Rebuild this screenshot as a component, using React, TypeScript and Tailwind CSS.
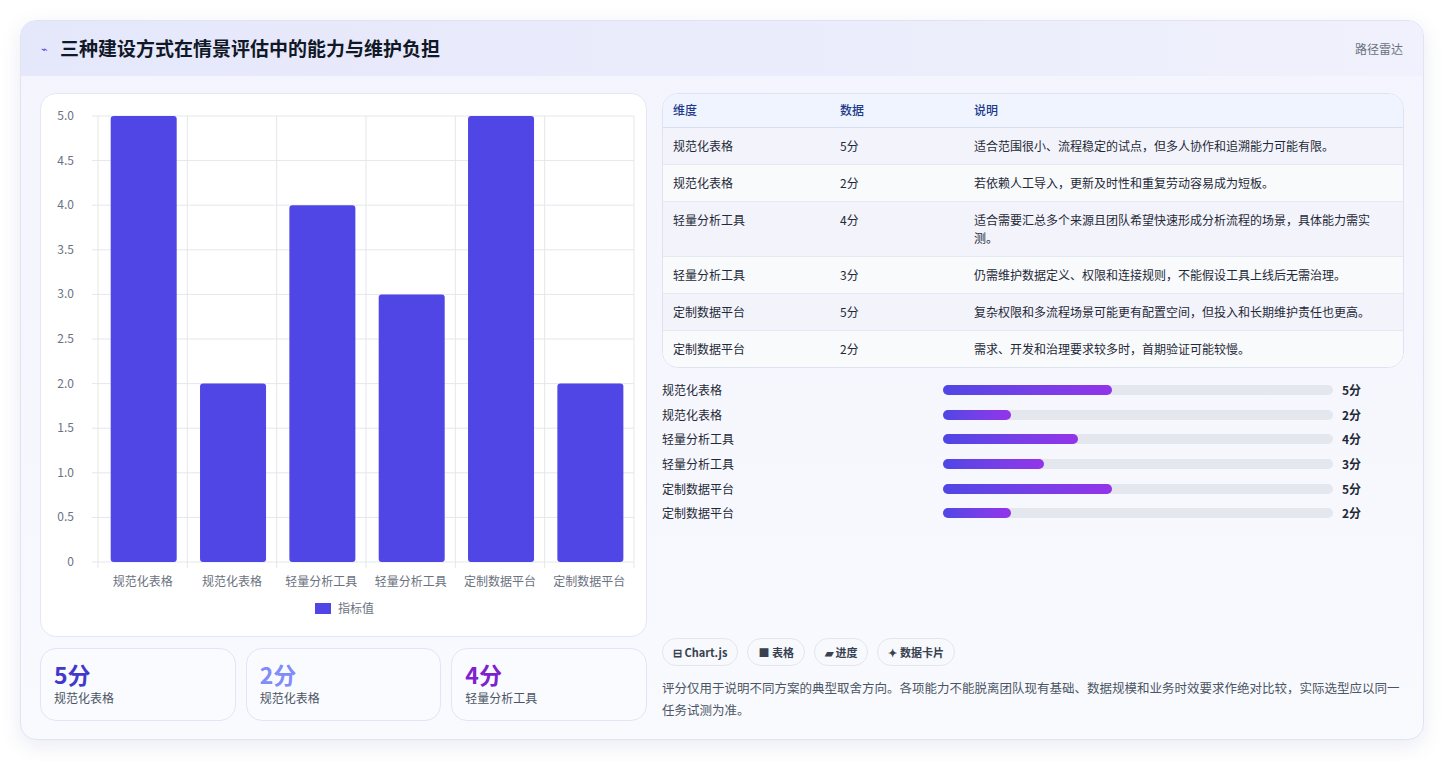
import React from "react";

const cats = ["规范化表格", "规范化表格", "轻量分析工具", "轻量分析工具", "定制数据平台", "定制数据平台"];
const vals = [5, 2, 4, 3, 5, 2];
const rows = [
  ["规范化表格", "5分", "适合范围很小、流程稳定的试点，但多人协作和追溯能力可能有限。"],
  ["规范化表格", "2分", "若依赖人工导入，更新及时性和重复劳动容易成为短板。"],
  ["轻量分析工具", "4分", "适合需要汇总多个来源且团队希望快速形成分析流程的场景，具体能力需实测。"],
  ["轻量分析工具", "3分", "仍需维护数据定义、权限和连接规则，不能假设工具上线后无需治理。"],
  ["定制数据平台", "5分", "复杂权限和多流程场景可能更有配置空间，但投入和长期维护责任也更高。"],
  ["定制数据平台", "2分", "需求、开发和治理要求较多时，首期验证可能较慢。"],
];

function Chart() {
  const x0 = 57, x1 = 593, yTop = 22, yBot = 468;
  const w = (x1 - x0) / 6;
  const ticks = [0, 0.5, 1, 1.5, 2, 2.5, 3, 3.5, 4, 4.5, 5];
  const y = (v: number) => yBot - (v / 5) * (yBot - yTop);
  return (
    <svg width="607" height="544" className="block" style={{ fontFamily: '"Noto Sans CJK SC", sans-serif' }}>
      {ticks.map((t) => (
        <g key={t}>
          <line x1={x0 - 6} x2={x1} y1={y(t)} y2={y(t)} stroke="#e5e7eb" />
          <text x={x0 - 24} y={y(t) + 4} fontSize="12" fill="#6b7280" textAnchor="end">{t === 0 ? "0" : t.toFixed(1)}</text>
        </g>
      ))}
      {[0, 1, 2, 3, 4, 5, 6].map((i) => (
        <line key={i} x1={x0 + i * w} x2={x0 + i * w} y1={yTop} y2={yBot + 6} stroke="#e5e7eb" />
      ))}
      {vals.map((v, i) => (
        <g key={i}>
          <rect x={x0 + i * w + 12.7} y={y(v)} width={66} height={yBot - y(v)} rx="3" fill="#4f46e5" />
          <text x={x0 + i * w + w / 2} y={yBot + 24} fontSize="12" fill="#6b7280" textAnchor="middle">{cats[i]}</text>
        </g>
      ))}
      <rect x="274" y="509" width="16" height="11" fill="#4f46e5" />
      <text x="297" y="519" fontSize="12" fill="#6b7280">指标值</text>
    </svg>
  );
}

export default function App() {
  return (
    <div className="min-h-[761px] bg-white p-5" style={{ fontFamily: '"Noto Sans CJK SC", "Noto Sans", sans-serif' }}>
      <div className="rounded-2xl border border-[#dfe3f3] bg-gradient-to-b from-[#f3f4fd] to-[#f9fafe] shadow-[0_6px_20px_rgba(80,90,160,0.12)] overflow-hidden">
        <div className="flex h-[55px] items-center justify-between bg-gradient-to-r from-[#e5e7fb] to-[#f0f1fc] px-[20px]">
          <div className="flex items-center gap-3">
            <span className="text-[11px] text-[#4f46e5]">⌁</span>
            <span className="text-[19px] font-bold text-[#111827]">三种建设方式在情景评估中的能力与维护负担</span>
          </div>
          <span className="text-[12px] text-[#6b7280]">路径雷达</span>
        </div>
        <div className="flex gap-[15px] px-[19px] pt-[17px] pb-[18px]">
          <div className="flex w-[607px] flex-col gap-[11px]">
            <div className="h-[544px] rounded-2xl border border-[#e3e7f3] bg-white"><Chart /></div>
            <div className="grid grid-cols-3 gap-[10px]">
              {[["5分", "text-[#4338ca]", "规范化表格"], ["2分", "text-[#818cf8]", "规范化表格"], ["4分", "text-[#7e22ce]", "轻量分析工具"]].map(([a, c, b], i) => (
                <div key={i} className="h-[73px] rounded-2xl border border-[#e0e6f5] bg-[#fafbff] px-[13px] pt-[10px]">
                  <div className={`text-[23px] font-bold leading-[30px] ${c}`}>{a}</div>
                  <div className="text-[12px] text-[#4b5563]">{b}</div>
                </div>
              ))}
            </div>
          </div>
          <div className="flex w-[743px] flex-col">
            <div className="overflow-hidden rounded-2xl border border-[#dde3f0] bg-white">
              <table className="w-full text-[12px] text-[#1f2937]">
                <thead>
                  <tr className="h-[33px] bg-[#eff4fe] text-left text-[#1e3a8a] border-b border-[#d7def0]">
                    <th className="w-[177px] pl-[10px] font-medium">维度</th>
                    <th className="w-[134px] font-medium">数据</th>
                    <th className="font-medium">说明</th>
                  </tr>
                </thead>
                <tbody>
                  {rows.map((r, i) => (
                    <tr key={i} className={`border-b border-[#e5e9f2] last:border-0 ${i % 2 ? "bg-[#f8fafc]" : "bg-[#f3f4fb]"}`}>
                      <td className="pl-[10px] py-[9px] align-top">{r[0]}</td>
                      <td className="py-[9px] align-top">{r[1]}</td>
                      <td className="py-[9px] pr-[20px] leading-[18px] align-top">{r[2]}</td>
                    </tr>
                  ))}
                </tbody>
              </table>
            </div>
            <div className="mt-[10px] flex flex-col">
              {rows.map((r, i) => (
                <div key={i} className="flex h-[24.7px] items-center text-[12px] text-[#1f2937]">
                  <span className="w-[281px]">{r[0]}</span>
                  <div className="h-[10px] w-[390px] rounded-full bg-[#e5e7ee]">
                    <div className="h-full rounded-full bg-gradient-to-r from-[#4f46e5] to-[#9333ea]" style={{ width: `${vals[i] * 8.67}%` }} />
                  </div>
                  <span className="ml-[9px] font-bold">{r[1]}</span>
                </div>
              ))}
            </div>
            <div className="mt-auto flex gap-[9px] text-[11px] font-semibold text-[#374151]">
              {["⊟ Chart.js", "■ 表格", "▰ 进度", "✦ 数据卡片"].map((t) => (
                <span key={t} className="rounded-full border border-[#e3e6ee] bg-[#f8f9fc] px-[10px] py-[5px]">{t}</span>
              ))}
            </div>
            <p className="mt-[11px] text-[12.5px] leading-[22px] text-[#4b5563]">评分仅用于说明不同方案的典型取舍方向。各项能力不能脱离团队现有基础、数据规模和业务时效要求作绝对比较，实际选型应以同一任务试测为准。</p>
          </div>
        </div>
      </div>
    </div>
  );
}
